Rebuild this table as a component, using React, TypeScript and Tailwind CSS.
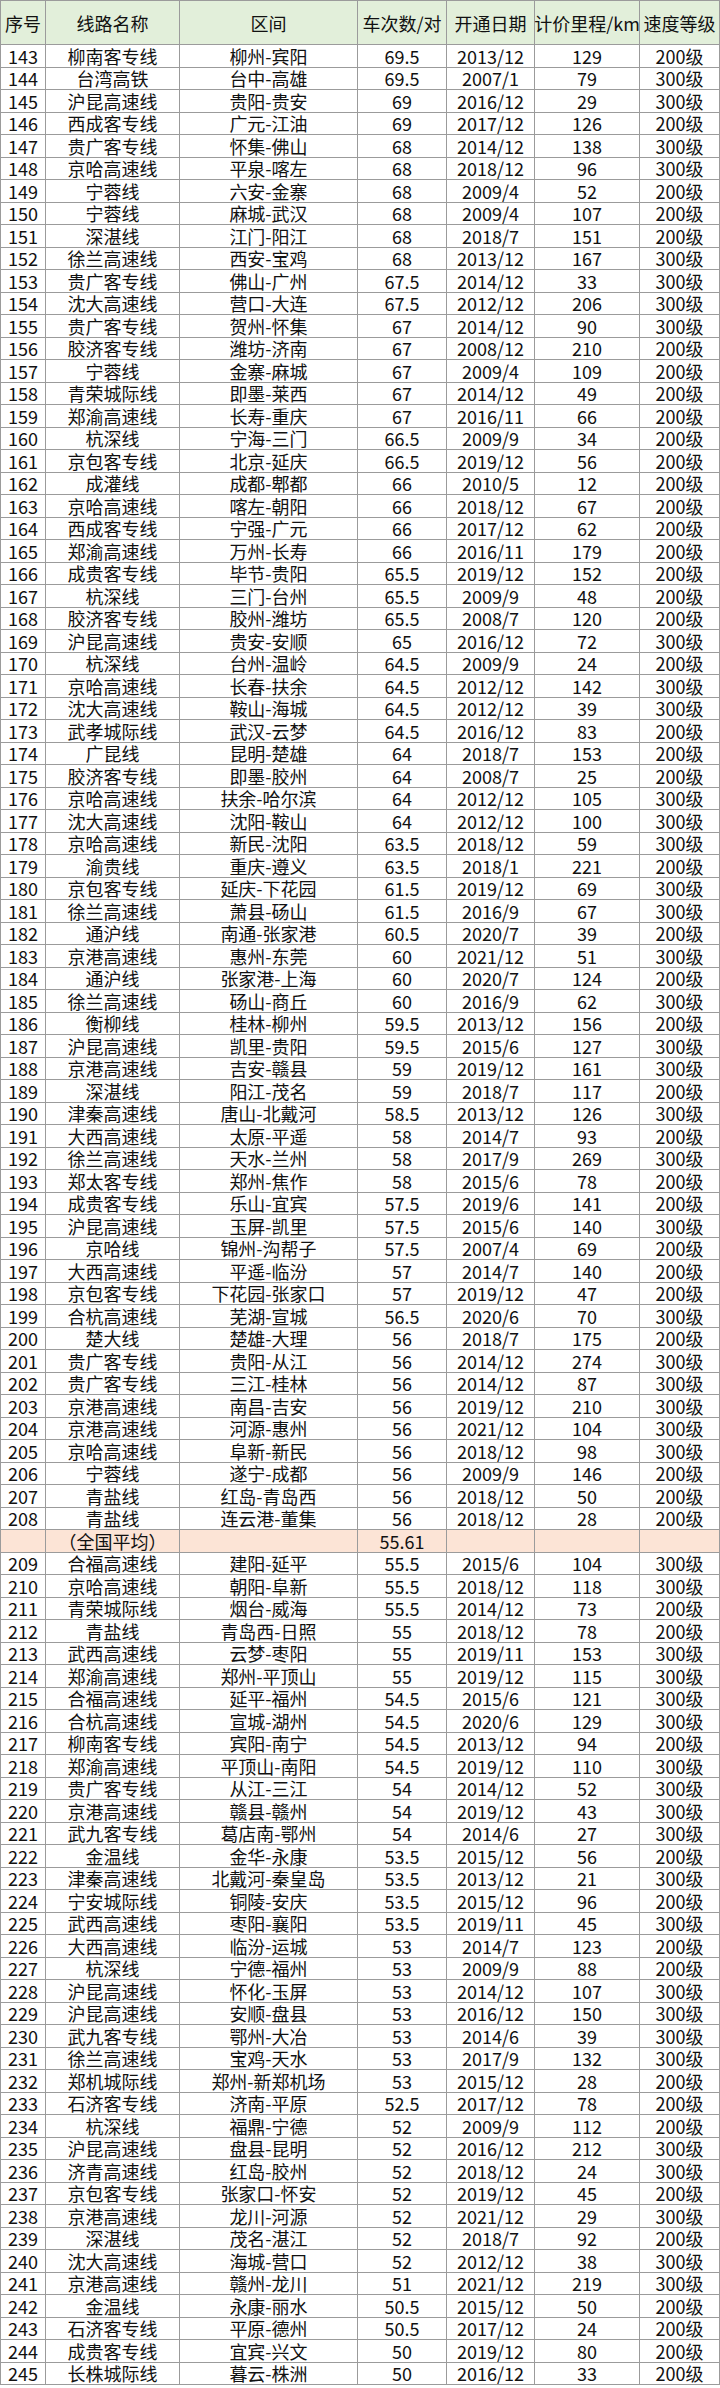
import React from "react";

type Row = [number, string, string, string, string, number, string];

const rows: Row[] = [
  [143, "柳南客专线", "柳州-宾阳", "69.5", "2013/12", 129, "200级"],
  [144, "台湾高铁", "台中-高雄", "69.5", "2007/1", 79, "300级"],
  [145, "沪昆高速线", "贵阳-贵安", "69", "2016/12", 29, "300级"],
  [146, "西成客专线", "广元-江油", "69", "2017/12", 126, "200级"],
  [147, "贵广客专线", "怀集-佛山", "68", "2014/12", 138, "300级"],
  [148, "京哈高速线", "平泉-喀左", "68", "2018/12", 96, "300级"],
  [149, "宁蓉线", "六安-金寨", "68", "2009/4", 52, "200级"],
  [150, "宁蓉线", "麻城-武汉", "68", "2009/4", 107, "200级"],
  [151, "深湛线", "江门-阳江", "68", "2018/7", 151, "200级"],
  [152, "徐兰高速线", "西安-宝鸡", "68", "2013/12", 167, "300级"],
  [153, "贵广客专线", "佛山-广州", "67.5", "2014/12", 33, "300级"],
  [154, "沈大高速线", "营口-大连", "67.5", "2012/12", 206, "300级"],
  [155, "贵广客专线", "贺州-怀集", "67", "2014/12", 90, "300级"],
  [156, "胶济客专线", "潍坊-济南", "67", "2008/12", 210, "200级"],
  [157, "宁蓉线", "金寨-麻城", "67", "2009/4", 109, "200级"],
  [158, "青荣城际线", "即墨-莱西", "67", "2014/12", 49, "200级"],
  [159, "郑渝高速线", "长寿-重庆", "67", "2016/11", 66, "200级"],
  [160, "杭深线", "宁海-三门", "66.5", "2009/9", 34, "200级"],
  [161, "京包客专线", "北京-延庆", "66.5", "2019/12", 56, "200级"],
  [162, "成灌线", "成都-郫都", "66", "2010/5", 12, "200级"],
  [163, "京哈高速线", "喀左-朝阳", "66", "2018/12", 67, "200级"],
  [164, "西成客专线", "宁强-广元", "66", "2017/12", 62, "200级"],
  [165, "郑渝高速线", "万州-长寿", "66", "2016/11", 179, "200级"],
  [166, "成贵客专线", "毕节-贵阳", "65.5", "2019/12", 152, "200级"],
  [167, "杭深线", "三门-台州", "65.5", "2009/9", 48, "200级"],
  [168, "胶济客专线", "胶州-潍坊", "65.5", "2008/7", 120, "200级"],
  [169, "沪昆高速线", "贵安-安顺", "65", "2016/12", 72, "300级"],
  [170, "杭深线", "台州-温岭", "64.5", "2009/9", 24, "200级"],
  [171, "京哈高速线", "长春-扶余", "64.5", "2012/12", 142, "300级"],
  [172, "沈大高速线", "鞍山-海城", "64.5", "2012/12", 39, "300级"],
  [173, "武孝城际线", "武汉-云梦", "64.5", "2016/12", 83, "200级"],
  [174, "广昆线", "昆明-楚雄", "64", "2018/7", 153, "200级"],
  [175, "胶济客专线", "即墨-胶州", "64", "2008/7", 25, "200级"],
  [176, "京哈高速线", "扶余-哈尔滨", "64", "2012/12", 105, "300级"],
  [177, "沈大高速线", "沈阳-鞍山", "64", "2012/12", 100, "300级"],
  [178, "京哈高速线", "新民-沈阳", "63.5", "2018/12", 59, "300级"],
  [179, "渝贵线", "重庆-遵义", "63.5", "2018/1", 221, "200级"],
  [180, "京包客专线", "延庆-下花园", "61.5", "2019/12", 69, "300级"],
  [181, "徐兰高速线", "萧县-砀山", "61.5", "2016/9", 67, "300级"],
  [182, "通沪线", "南通-张家港", "60.5", "2020/7", 39, "200级"],
  [183, "京港高速线", "惠州-东莞", "60", "2021/12", 51, "300级"],
  [184, "通沪线", "张家港-上海", "60", "2020/7", 124, "200级"],
  [185, "徐兰高速线", "砀山-商丘", "60", "2016/9", 62, "300级"],
  [186, "衡柳线", "桂林-柳州", "59.5", "2013/12", 156, "200级"],
  [187, "沪昆高速线", "凯里-贵阳", "59.5", "2015/6", 127, "300级"],
  [188, "京港高速线", "吉安-赣县", "59", "2019/12", 161, "300级"],
  [189, "深湛线", "阳江-茂名", "59", "2018/7", 117, "200级"],
  [190, "津秦高速线", "唐山-北戴河", "58.5", "2013/12", 126, "300级"],
  [191, "大西高速线", "太原-平遥", "58", "2014/7", 93, "200级"],
  [192, "徐兰高速线", "天水-兰州", "58", "2017/9", 269, "300级"],
  [193, "郑太客专线", "郑州-焦作", "58", "2015/6", 78, "200级"],
  [194, "成贵客专线", "乐山-宜宾", "57.5", "2019/6", 141, "200级"],
  [195, "沪昆高速线", "玉屏-凯里", "57.5", "2015/6", 140, "300级"],
  [196, "京哈线", "锦州-沟帮子", "57.5", "2007/4", 69, "200级"],
  [197, "大西高速线", "平遥-临汾", "57", "2014/7", 140, "200级"],
  [198, "京包客专线", "下花园-张家口", "57", "2019/12", 47, "200级"],
  [199, "合杭高速线", "芜湖-宣城", "56.5", "2020/6", 70, "300级"],
  [200, "楚大线", "楚雄-大理", "56", "2018/7", 175, "200级"],
  [201, "贵广客专线", "贵阳-从江", "56", "2014/12", 274, "300级"],
  [202, "贵广客专线", "三江-桂林", "56", "2014/12", 87, "300级"],
  [203, "京港高速线", "南昌-吉安", "56", "2019/12", 210, "300级"],
  [204, "京港高速线", "河源-惠州", "56", "2021/12", 104, "300级"],
  [205, "京哈高速线", "阜新-新民", "56", "2018/12", 98, "300级"],
  [206, "宁蓉线", "遂宁-成都", "56", "2009/9", 146, "200级"],
  [207, "青盐线", "红岛-青岛西", "56", "2018/12", 50, "200级"],
  [208, "青盐线", "连云港-董集", "56", "2018/12", 28, "200级"],
  [209, "合福高速线", "建阳-延平", "55.5", "2015/6", 104, "300级"],
  [210, "京哈高速线", "朝阳-阜新", "55.5", "2018/12", 118, "300级"],
  [211, "青荣城际线", "烟台-威海", "55.5", "2014/12", 73, "200级"],
  [212, "青盐线", "青岛西-日照", "55", "2018/12", 78, "200级"],
  [213, "武西高速线", "云梦-枣阳", "55", "2019/11", 153, "300级"],
  [214, "郑渝高速线", "郑州-平顶山", "55", "2019/12", 115, "300级"],
  [215, "合福高速线", "延平-福州", "54.5", "2015/6", 121, "300级"],
  [216, "合杭高速线", "宣城-湖州", "54.5", "2020/6", 129, "300级"],
  [217, "柳南客专线", "宾阳-南宁", "54.5", "2013/12", 94, "200级"],
  [218, "郑渝高速线", "平顶山-南阳", "54.5", "2019/12", 110, "300级"],
  [219, "贵广客专线", "从江-三江", "54", "2014/12", 52, "300级"],
  [220, "京港高速线", "赣县-赣州", "54", "2019/12", 43, "300级"],
  [221, "武九客专线", "葛店南-鄂州", "54", "2014/6", 27, "300级"],
  [222, "金温线", "金华-永康", "53.5", "2015/12", 56, "200级"],
  [223, "津秦高速线", "北戴河-秦皇岛", "53.5", "2013/12", 21, "300级"],
  [224, "宁安城际线", "铜陵-安庆", "53.5", "2015/12", 96, "200级"],
  [225, "武西高速线", "枣阳-襄阳", "53.5", "2019/11", 45, "300级"],
  [226, "大西高速线", "临汾-运城", "53", "2014/7", 123, "200级"],
  [227, "杭深线", "宁德-福州", "53", "2009/9", 88, "200级"],
  [228, "沪昆高速线", "怀化-玉屏", "53", "2014/12", 107, "300级"],
  [229, "沪昆高速线", "安顺-盘县", "53", "2016/12", 150, "300级"],
  [230, "武九客专线", "鄂州-大冶", "53", "2014/6", 39, "300级"],
  [231, "徐兰高速线", "宝鸡-天水", "53", "2017/9", 132, "300级"],
  [232, "郑机城际线", "郑州-新郑机场", "53", "2015/12", 28, "200级"],
  [233, "石济客专线", "济南-平原", "52.5", "2017/12", 78, "200级"],
  [234, "杭深线", "福鼎-宁德", "52", "2009/9", 112, "200级"],
  [235, "沪昆高速线", "盘县-昆明", "52", "2016/12", 212, "300级"],
  [236, "济青高速线", "红岛-胶州", "52", "2018/12", 24, "300级"],
  [237, "京包客专线", "张家口-怀安", "52", "2019/12", 45, "200级"],
  [238, "京港高速线", "龙川-河源", "52", "2021/12", 29, "300级"],
  [239, "深湛线", "茂名-湛江", "52", "2018/7", 92, "200级"],
  [240, "沈大高速线", "海城-营口", "52", "2012/12", 38, "300级"],
  [241, "京港高速线", "赣州-龙川", "51", "2021/12", 219, "300级"],
  [242, "金温线", "永康-丽水", "50.5", "2015/12", 50, "200级"],
  [243, "石济客专线", "平原-德州", "50.5", "2017/12", 24, "200级"],
  [244, "成贵客专线", "宜宾-兴文", "50", "2019/12", 80, "200级"],
  [245, "长株城际线", "暮云-株洲", "50", "2016/12", 33, "200级"],
];

const headers = ["序号", "线路名称", "区间", "车次数/对", "开通日期", "计价里程/km", "速度等级"];

// 列宽照着截图量的
const gridCols = "grid grid-cols-[46px_134px_178px_89px_88px_105px_80px]";
const cell =
  "flex items-center justify-center border-r border-b border-[#9b9b9b] whitespace-nowrap leading-none";

function Cell({ children, first }: { children?: React.ReactNode; first?: boolean }) {
  return <div className={`${cell} ${first ? "border-l" : ""}`}>{children}</div>;
}

export default function App() {
  return (
    <div
      className="w-[720px] bg-white text-[18px] text-[#111]"
      style={{ fontFamily: '"Noto Sans CJK SC", "Noto Sans", sans-serif' }}>
      <div className={`${gridCols} h-[45px] bg-[#e2efda] border-t border-[#9b9b9b]`}>
        {headers.map((h, i) => (
          <Cell key={h} first={i === 0}>
            {h}
          </Cell>
        ))}
      </div>

      {rows.map((r) => (
        <React.Fragment key={r[0]}>
          <div className={`${gridCols} h-[22.5px]`}>
            <Cell first>{r[0]}</Cell>
            <Cell>{r[1]}</Cell>
            <Cell>{r[2]}</Cell>
            <Cell>{r[3]}</Cell>
            <Cell>{r[4]}</Cell>
            <Cell>{r[5]}</Cell>
            <Cell>{r[6]}</Cell>
          </div>
          {r[0] === 208 && (
            <div className={`${gridCols} h-[22.5px] bg-[#fce4d6]`}>
              <Cell first />
              <Cell>（全国平均）</Cell>
              <Cell />
              <Cell>55.61</Cell>
              <Cell />
              <Cell />
              <Cell />
            </div>
          )}
        </React.Fragment>
      ))}
    </div>
  );
}
